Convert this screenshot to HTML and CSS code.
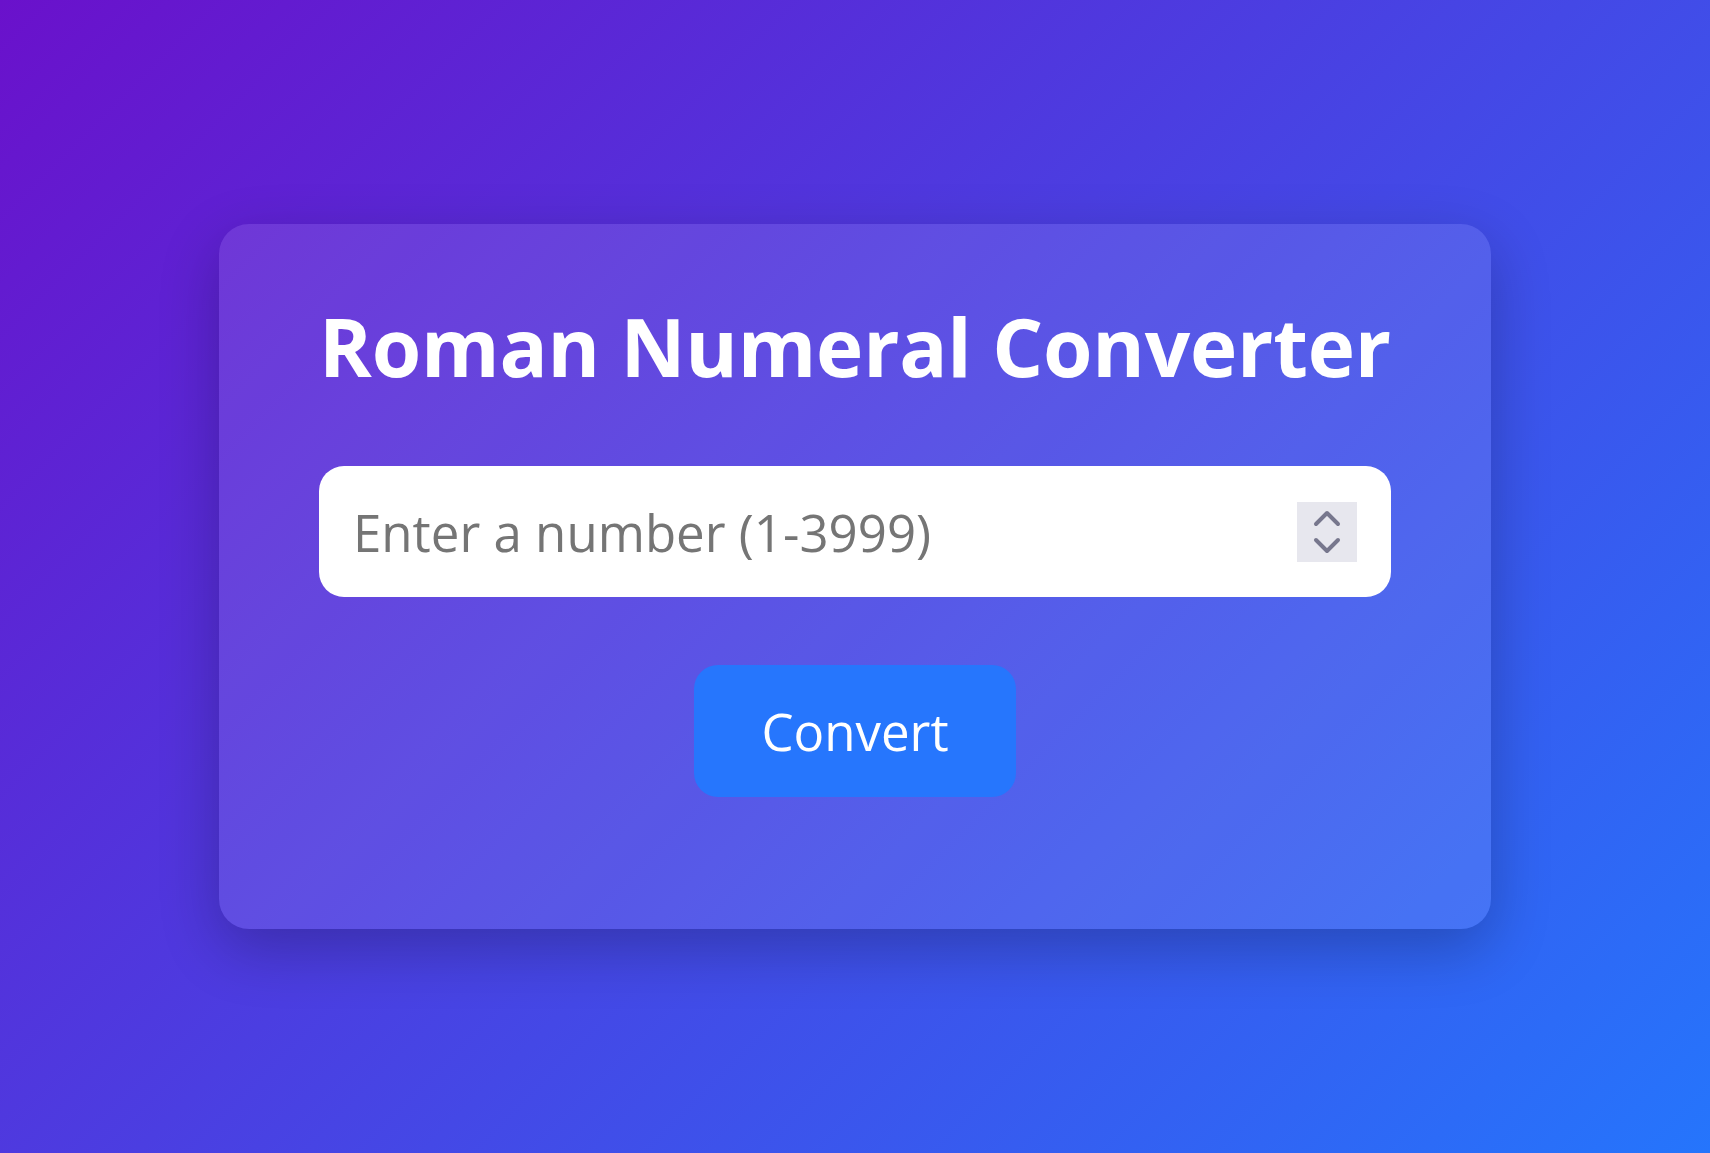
FILE: index.html
```html
<!DOCTYPE html>
<html lang="en">
<head>
<meta charset="utf-8">
<title>Roman Numeral Converter</title>
<link rel="stylesheet" href="styles.css">
</head>
<body>
  <main class="card">
    <h1 class="title">Roman Numeral Converter</h1>
    <div class="field">
      <input class="number-input" type="number" min="1" max="3999" placeholder="Enter a number (1-3999)">
      <div class="spin" aria-hidden="true">
        <svg width="60" height="60" viewBox="0 0 60 60">
          <path d="M19 22 L30 11 L41 22" fill="none" stroke="#77778d" stroke-width="4" stroke-linecap="round" stroke-linejoin="round"/>
          <path d="M19 38 L30 49 L41 38" fill="none" stroke="#77778d" stroke-width="4" stroke-linecap="round" stroke-linejoin="round"/>
        </svg>
      </div>
    </div>
    <button class="convert" type="button">Convert</button>
  </main>
</body>
</html>
```
FILE: styles.css
```css
html, body {
  margin: 0;
  padding: 0;
}

body {
  min-height: 100vh;
  display: flex;
  align-items: center;
  justify-content: center;
  background: linear-gradient(135deg, #6a11cb 0%, #2575fc 100%);
  font-family: "Open Sans", "Noto Sans", sans-serif;
}

.card {
  box-sizing: border-box;
  width: 1272px;
  padding: 67px 100px 132px;
  border-radius: 30px;
  background: rgba(255, 255, 255, 0.1);
  box-shadow: 0 20px 60px rgba(0, 0, 0, 0.24);
  display: flex;
  flex-direction: column;
  align-items: center;
}

.title {
  margin: 0 0 66px;
  color: #ffffff;
  font-size: 80px;
  font-weight: 700;
  line-height: 109px;
  text-align: center;
  white-space: nowrap;
  letter-spacing: -0.2px;
}

.field {
  box-sizing: border-box;
  width: 100%;
  height: 131px;
  margin-bottom: 68px;
  padding: 0 34px 0 34px;
  background: #ffffff;
  border-radius: 25px;
  display: flex;
  align-items: center;
}

.number-input {
  flex: 1;
  min-width: 0;
  border: none;
  outline: none;
  background: transparent;
  padding: 0;
  font-family: "Open Sans", "Noto Sans", sans-serif;
  font-size: 51px;
  color: #333333;
  -moz-appearance: textfield;
}

.number-input::placeholder {
  color: #757575;
}

.number-input::-webkit-inner-spin-button,
.number-input::-webkit-outer-spin-button {
  -webkit-appearance: none;
  margin: 0;
}

.spin {
  width: 60px;
  height: 60px;
  background: #e7e7ee;
  display: flex;
}

.convert {
  box-sizing: border-box;
  width: 322px;
  height: 132px;
  border: none;
  border-radius: 24px;
  background: #2676fd;
  color: #ffffff;
  font-family: "Open Sans", "Noto Sans", sans-serif;
  font-size: 51px;
  font-weight: 400;
  cursor: pointer;
}
```
